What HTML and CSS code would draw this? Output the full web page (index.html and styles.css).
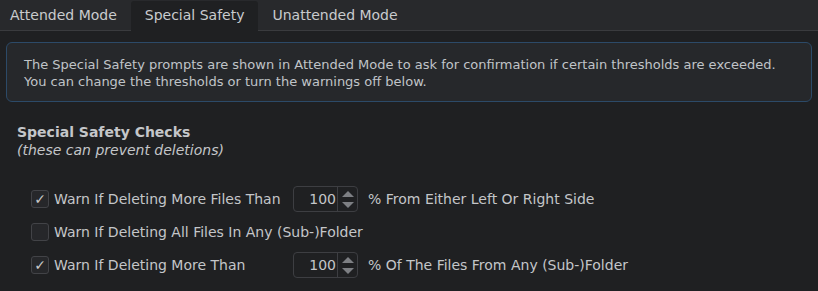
FILE: index.html
```html
<!DOCTYPE html>
<html lang="en">
<head>
    <meta charset="UTF-8">
    <title>Special Safety</title>
    <link rel="stylesheet" href="styles.css">
</head>
<body>
    <div class="tabs">
        <div class="tab">Attended Mode</div>
        <div class="tab active">Special Safety</div>
        <div class="tab">Unattended Mode</div>
    </div>

    <div class="info">
        The Special Safety prompts are shown in Attended Mode to ask for confirmation if certain thresholds are exceeded.<br>
        You can change the thresholds or turn the warnings off below.
    </div>

    <div class="section">
        <h2>Special Safety Checks</h2>
        <p class="sub">(these can prevent deletions)</p>
    </div>

    <div class="checks">
        <label class="check">
            <span class="box checked">&#10003;</span>
            <span>Warn If Deleting More Files Than</span>
        </label>
        <div class="spin"><span class="val">100</span><span class="arrows"><i class="up"></i><i class="down"></i></span></div>
        <span class="after">% From Either Left Or Right Side</span>

        <label class="check wide">
            <span class="box"></span>
            <span>Warn If Deleting All Files In Any (Sub-)Folder</span>
        </label>

        <label class="check">
            <span class="box checked">&#10003;</span>
            <span>Warn If Deleting More Than</span>
        </label>
        <div class="spin"><span class="val">100</span><span class="arrows"><i class="up"></i><i class="down"></i></span></div>
        <span class="after">% Of The Files From Any (Sub-)Folder</span>
    </div>
</body>
</html>
```

FILE: styles.css
```css
body {
    margin: 0;
    background-color: #1f2022;
    color: #c4c6c9;
    font-family: "DejaVu Sans", Verdana, sans-serif;
    font-size: 13px;
}

.tabs {
    display: flex;
    background-color: #28292c;
    border-bottom: 1px solid #3a3b3e;
    height: 30px;
}

.tab {
    padding: 0 14px;
    line-height: 31px;
    font-size: 14px;
    color: #c9cbce;
}

.tabs .tab:first-child {
    padding-left: 10px;
}

.tab.active {
    background-color: #1f2022;
    border-radius: 3px 3px 0 0;
    margin-top: 1px;
    margin-bottom: -1px;
    line-height: 29px;
}

.info {
    margin: 11px 6px 0 6px;
    padding: 13px 17px 11px 17px;
    background-color: #26282b;
    border: 1px solid #2c4a68;
    border-radius: 6px;
    line-height: 17px;
    color: #c0c4c8;
}

.section {
    padding: 21px 17px 0 17px;
    font-size: 14px;
}

.section h2 {
    margin: 0;
    font-size: 14px;
    font-weight: bold;
    line-height: 18px;
    color: #c4c6c9;
}

.section .sub {
    margin: 0;
    font-style: italic;
    line-height: 18px;
}

.checks {
    display: grid;
    grid-template-columns: 262px 66px auto;
    align-items: center;
    row-gap: 7px;
    padding: 27px 0 0 31px;
    font-size: 14px;
}

.check {
    display: flex;
    align-items: center;
    gap: 5px;
    height: 26px;
}

.check.wide {
    grid-column: 1 / 4;
}

.box {
    width: 16px;
    height: 16px;
    border: 1px solid #424347;
    border-radius: 3px;
    background-color: #26272a;
    color: #c8c8c8;
    font-size: 14px;
    line-height: 17px;
    text-align: center;
}

.spin {
    display: flex;
    height: 24px;
    width: 63px;
    border: 1px solid #3d3e42;
    border-radius: 4px;
}

.spin .val {
    flex: 1;
    text-align: right;
    line-height: 24px;
    padding-right: 1px;
}

.spin .arrows {
    width: 19px;
    border-left: 1px solid #3d3e42;
    display: flex;
    flex-direction: column;
    align-items: center;
    justify-content: center;
    gap: 5px;
}

.up, .down {
    width: 0;
    height: 0;
    border-left: 6px solid transparent;
    border-right: 6px solid transparent;
}

.up {
    border-bottom: 6px solid #7d7f83;
}

.down {
    border-top: 6px solid #7d7f83;
}

.after {
    padding-left: 9px;
}
```
